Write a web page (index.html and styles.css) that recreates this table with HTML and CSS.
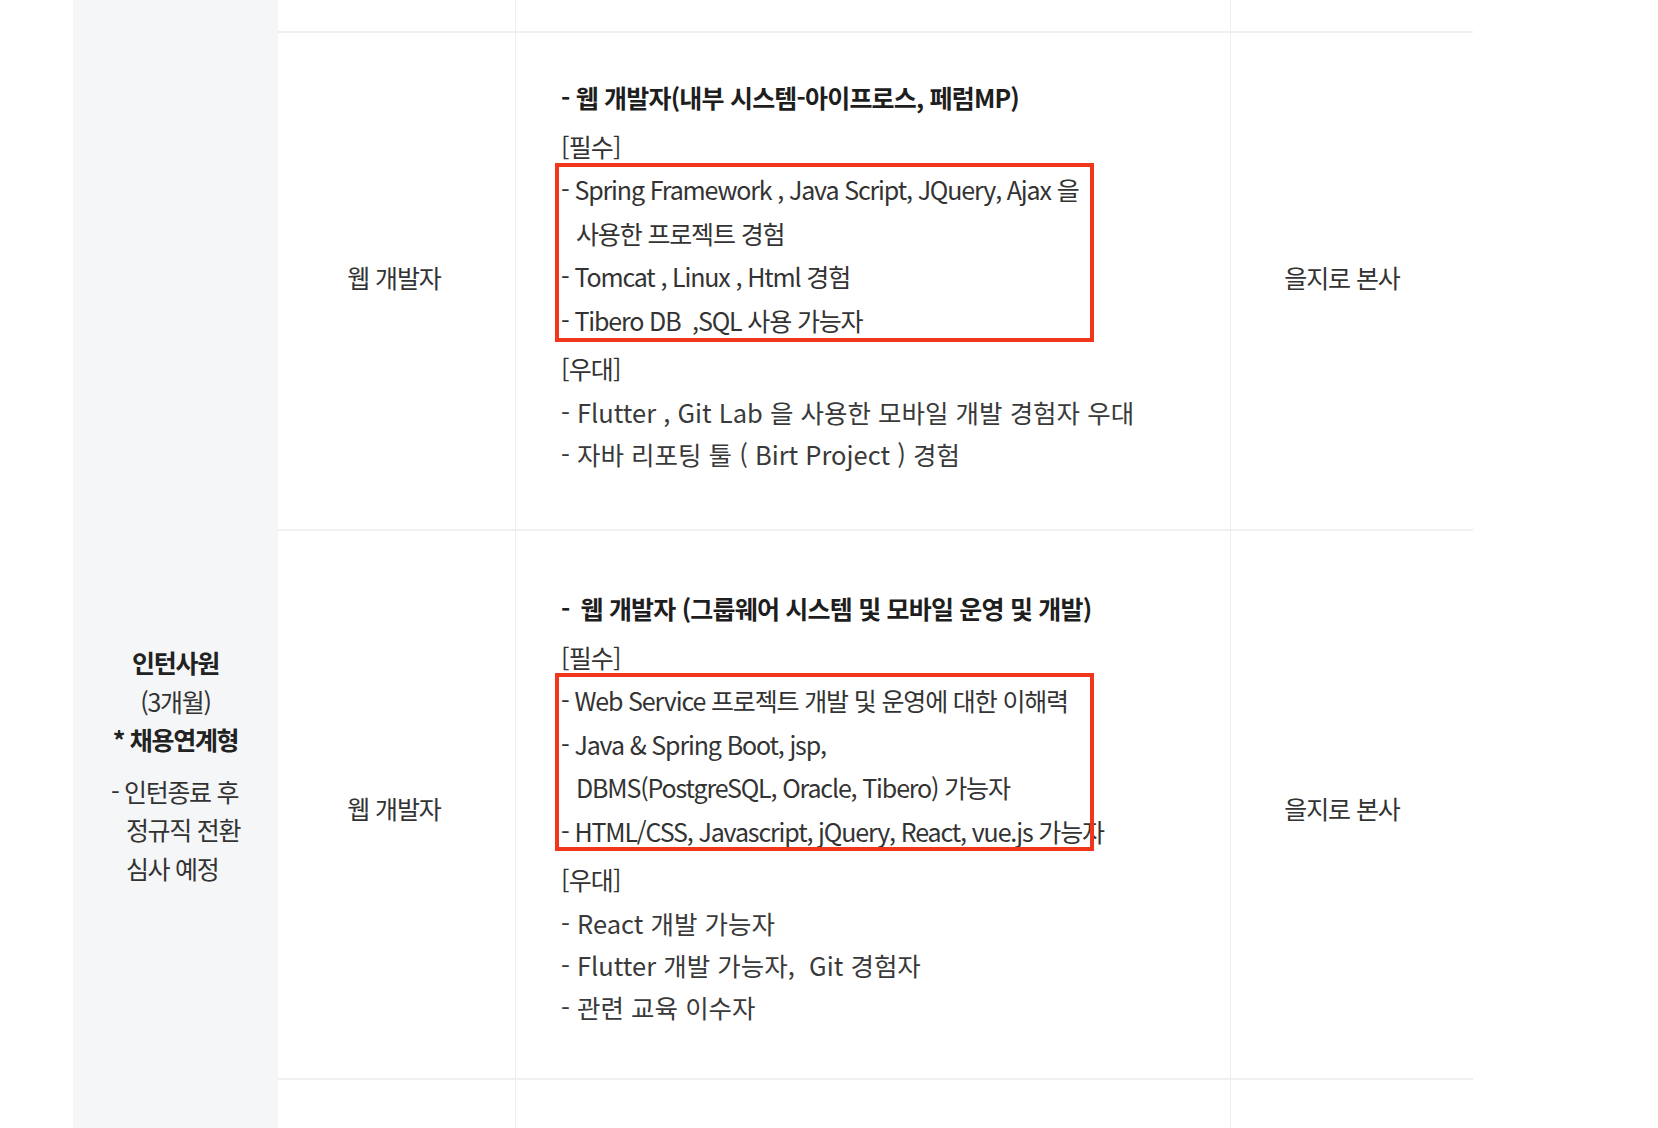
FILE: index.html
```html
<!DOCTYPE html>
<html lang="ko">
<head>
<meta charset="utf-8">
<link rel="stylesheet" href="styles.css">
</head>
<body>
<div class="table">
  <div class="side">
    <div class="side-main">
      <div class="b">인턴사원</div>
      <div>(3개월)</div>
      <div class="b">* 채용연계형</div>
    </div>
    <div class="side-note">
      <div>- 인턴종료 후</div>
      <div class="ind">정규직 전환</div>
      <div class="ind">심사 예정</div>
    </div>
  </div>

  <div class="cell top c2"></div>
  <div class="cell top c3"></div>
  <div class="cell top c4"></div>

  <div class="cell role r1">웹 개발자</div>
  <div class="cell desc r1">
    <div class="title">- 웹 개발자(내부 시스템-아이프로스, 페럼MP)</div>
    <div class="label">[필수]</div>
    <div class="hl hl-a">
      <div class="ln">- Spring Framework , Java Script, JQuery, Ajax 을</div>
      <div class="ln ind">사용한 프로젝트 경험</div>
      <div class="ln">- Tomcat , Linux , Html 경험</div>
      <div class="ln">- Tibero DB &nbsp;,SQL 사용 가능자</div>
    </div>
    <div class="label gap">[우대]</div>
    <div class="plain">- Flutter , Git Lab 을 사용한 모바일 개발 경험자 우대</div>
    <div class="plain">- 자바 리포팅 툴 ( Birt Project ) 경험</div>
  </div>
  <div class="cell place r1">을지로 본사</div>

  <div class="cell role r2">웹 개발자</div>
  <div class="cell desc r2">
    <div class="title">-<span class="dash-gap"> </span>웹 개발자 (그룹웨어 시스템 및 모바일 운영 및 개발)</div>
    <div class="label">[필수]</div>
    <div class="hl hl-b">
      <div class="ln">- Web Service 프로젝트 개발 및 운영에 대한 이해력</div>
      <div class="ln">- Java &amp; Spring Boot, jsp,</div>
      <div class="ln ind">DBMS(PostgreSQL, Oracle, Tibero) 가능자</div>
      <div class="ln">- HTML/CSS, Javascript, jQuery, React, vue.js 가능자</div>
    </div>
    <div class="label gap">[우대]</div>
    <div class="plain">- React 개발 가능자</div>
    <div class="plain">- Flutter 개발 가능자, &nbsp;Git 경험자</div>
    <div class="plain">- 관련 교육 이수자</div>
  </div>
  <div class="cell place r2">을지로 본사</div>

  <div class="cell bottom c2"></div>
  <div class="cell bottom c3"></div>
  <div class="cell bottom c4"></div>
</div>
</body>
</html>
```

FILE: styles.css
```css
html, body {
  margin: 0;
  padding: 0;
  background: #ffffff;
}
body {
  width: 1658px;
  height: 1128px;
  overflow: hidden;
  font-family: "Noto Sans CJK KR", "Noto Sans", sans-serif;
  color: #333333;
}
.table {
  margin-left: 73px;
  display: grid;
  grid-template-columns: 205px 237px 715px 243px;
  grid-template-rows: 31px 498px 549px 60px;
}
.side {
  grid-column: 1;
  grid-row: 1 / -1;
  background: #f5f6f8;
  display: flex;
  flex-direction: column;
  align-items: center;
  padding-top: 643px;
  font-size: 25px;
  letter-spacing: -1.3px;
  line-height: 38.5px;
  color: #333;
}
.side-main {
  text-align: center;
}
.side .b {
  font-weight: 700;
  color: #222;
}
.side-note {
  margin-top: 13px;
  padding-left: 15px;
  text-indent: -15px;
}
.side-note .ind {
  text-indent: 0;
}
.cell {
  box-sizing: border-box;
}
.c2, .role { grid-column: 2; }
.c3, .desc { grid-column: 3; border-left: 1px solid #eeeeee; }
.c4, .place { grid-column: 4; border-left: 1px solid #eeeeee; }
.top { grid-row: 1; }
.r1 { grid-row: 2; border-top: 2px solid #f0f0f0; }
.r2 { grid-row: 3; border-top: 2px solid #f0f0f0; }
.bottom { grid-row: 4; border-top: 2px solid #f0f0f0; }

.role, .place {
  display: flex;
  align-items: center;
  justify-content: center;
  font-size: 25px;
  letter-spacing: -1.1px;
}
.role { padding-right: 5px; }
.place { padding-right: 20px; }
.role.r1, .place.r1 { padding-bottom: 8px; }
.role.r2, .place.r2 { padding-top: 7px; }

.desc {
  padding-left: 45px;
  font-size: 25px;
  line-height: 43.5px;
  white-space: nowrap;
}
.desc.r1 { padding-top: 43px; }
.desc.r2 { padding-top: 56px; }
.title {
  font-weight: 700;
  color: #1e1e1e;
  letter-spacing: -0.8px;
  margin-bottom: 5px;
}
.dash-gap {
  display: inline-block;
  width: 11px;
}
.label {
  letter-spacing: -0.8px;
}
.label.gap { margin-top: 5px; }
.hl {
  position: relative;
}
.hl .ln {
  letter-spacing: -1.15px;
}
.hl .ind {
  padding-left: 15px;
}
.hl::after {
  content: "";
  position: absolute;
  left: -6px;
  width: 539px;
  box-sizing: border-box;
  border: 4px solid #f2361b;
}
.hl-a::after {
  top: -5px;
  bottom: 0;
}
.hl-b::after {
  top: -6px;
  bottom: 2px;
}
.plain {
  font-size: 25.5px;
  line-height: 42px;
  letter-spacing: 0;
  color: #3a3a3a;
}
```
